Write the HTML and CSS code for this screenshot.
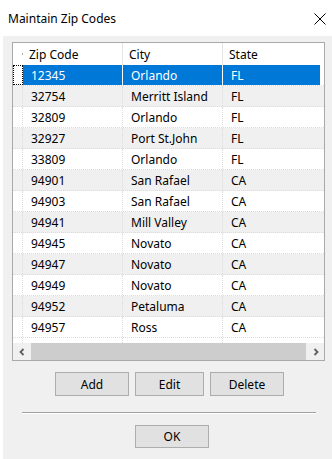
FILE: index.html
```html
<!DOCTYPE html>
<html>
<head>
<meta charset="utf-8">
<link rel="stylesheet" href="styles.css">
</head>
<body>
<div class="window">
  <div class="titlebar">
    <span class="title">Maintain Zip Codes</span>
    <svg class="close" width="12" height="12" viewBox="0 0 12 12"><path d="M0.5 0.5 L11.5 11.5 M11.5 0.5 L0.5 11.5" stroke="#000" stroke-width="1" fill="none"/></svg>
  </div>
  <div class="client">
    <div class="list">
      <div class="header">
        <div class="hcell h0"></div>
        <div class="hcell">Zip Code</div>
        <div class="hcell">City</div>
        <div class="hcell">State</div>
      </div>
      <div class="rows">
        <div class="row selected"><div class="cell c0"><span class="focus"></span></div><div class="cell">12345</div><div class="cell">Orlando</div><div class="cell">FL</div></div>
        <div class="row alt"><div class="cell c0"></div><div class="cell">32754</div><div class="cell">Merritt Island</div><div class="cell">FL</div></div>
        <div class="row"><div class="cell c0"></div><div class="cell">32809</div><div class="cell">Orlando</div><div class="cell">FL</div></div>
        <div class="row alt"><div class="cell c0"></div><div class="cell">32927</div><div class="cell">Port St.John</div><div class="cell">FL</div></div>
        <div class="row"><div class="cell c0"></div><div class="cell">33809</div><div class="cell">Orlando</div><div class="cell">FL</div></div>
        <div class="row alt"><div class="cell c0"></div><div class="cell">94901</div><div class="cell">San Rafael</div><div class="cell">CA</div></div>
        <div class="row"><div class="cell c0"></div><div class="cell">94903</div><div class="cell">San Rafael</div><div class="cell">CA</div></div>
        <div class="row alt"><div class="cell c0"></div><div class="cell">94941</div><div class="cell">Mill Valley</div><div class="cell">CA</div></div>
        <div class="row"><div class="cell c0"></div><div class="cell">94945</div><div class="cell">Novato</div><div class="cell">CA</div></div>
        <div class="row alt"><div class="cell c0"></div><div class="cell">94947</div><div class="cell">Novato</div><div class="cell">CA</div></div>
        <div class="row"><div class="cell c0"></div><div class="cell">94949</div><div class="cell">Novato</div><div class="cell">CA</div></div>
        <div class="row alt"><div class="cell c0"></div><div class="cell">94952</div><div class="cell">Petaluma</div><div class="cell">CA</div></div>
        <div class="row"><div class="cell c0"></div><div class="cell">94957</div><div class="cell">Ross</div><div class="cell">CA</div></div>
        <div class="row filler"><div class="cell c0"></div><div class="cell"></div><div class="cell"></div><div class="cell"></div></div>
      </div>
      <div class="hscroll">
        <div class="sbtn"><svg width="8" height="8" viewBox="0 0 8 8"><polyline points="5.5,1 2.5,4 5.5,7" fill="none" stroke="#606060" stroke-width="1.8"/></svg></div>
        <div class="track"><div class="thumb"></div></div>
        <div class="sbtn"><svg width="8" height="8" viewBox="0 0 8 8"><polyline points="2.5,1 5.5,4 2.5,7" fill="none" stroke="#606060" stroke-width="1.8"/></svg></div>
      </div>
    </div>
    <div class="buttons">
      <button class="btn b-add">Add</button>
      <button class="btn b-edit">Edit</button>
      <button class="btn b-del">Delete</button>
    </div>
    <div class="sep"></div>
    <div class="okrow">
      <button class="btn b-ok">OK</button>
    </div>
  </div>
</div>
</body>
</html>
```
FILE: styles.css
```css
* { box-sizing: border-box; }
html, body { margin: 0; padding: 0; background: #fff; }
body {
  font-family: "Noto Sans", "Open Sans", sans-serif;
  font-size: 12px;
  color: #000;
}
.window {
  width: 332px;
  height: 459px;
  display: flex;
  flex-direction: column;
  background: #fff;
  overflow: hidden;
}
.titlebar {
  height: 36px;
  display: flex;
  align-items: center;
  justify-content: space-between;
  padding: 2px 6px 0 8px;
}
.title { font-size: 12px; line-height: 16px; }
.close { margin-right: 0; }
.client {
  flex: 1;
  margin-left: 3px;
  background: #f0f0f0;
  padding: 6px 0 0 9px;
}
.list {
  width: 313px;
  height: 319px;
  border: 1px solid #a9a9a9;
  background: #fff;
  display: flex;
  flex-direction: column;
}
.header {
  height: 22px;
  display: grid;
  grid-template-columns: 10px 100px 100px 1fr;
}
.hcell {
  border-right: 1px solid #e5e5e5;
  padding-left: 6px;
  padding-top: 1px;
  line-height: 21px;
  white-space: nowrap;
}
.hcell.h0 { border-right: none; position: relative; }
.hcell.h0::after {
  content: "";
  position: absolute;
  right: 0;
  top: 10px;
  width: 1px;
  height: 2px;
  background: #b0b0b0;
}
.hcell:last-child { border-right: none; }
.rows { display: flex; flex-direction: column; }
.row {
  height: 21px;
  display: grid;
  grid-template-columns: 10px 100px 100px 1fr;
  border-bottom: 1px dotted #dcdcdc;
}
.row.alt { background: #f0f0f0; }
.cell {
  border-right: 1px dotted #dcdcdc;
  padding-left: 8px;
  padding-top: 1px;
  line-height: 20px;
  white-space: nowrap;
  overflow: hidden;
}
.cell:last-child { border-right: none; margin-right: 1px; }
.cell.c0 { padding: 0; position: relative; }
.row.selected .cell { background: #0078d7; color: #fff; border-right-color: #fff; border-right-style: solid; }
.row.selected .cell.c0 { background: #fff; border-right: none; }
.row.selected { border-bottom-color: #dcdcdc; }
.focus {
  position: absolute;
  left: 0;
  top: 0;
  width: 10px;
  height: 20px;
  border: 1px dotted #000;
}
.row.filler { height: 5px; border-bottom: none; }
.hscroll {
  height: 17px;
  display: flex;
  background: #f0f0f0;
}
.sbtn {
  width: 17px;
  height: 17px;
  display: flex;
  align-items: center;
  justify-content: center;
}
.track {
  flex: 1;
  padding: 0 1px;
}
.thumb { height: 17px; background: #cdcdcd; }
.buttons {
  display: flex;
  gap: 6px;
  margin: 11px 0 0 43px;
}
.btn {
  height: 24px;
  background: #e1e1e1;
  border: 1px solid #adadad;
  font-family: inherit;
  font-size: 12px;
  color: #000;
  padding: 0;
  border-radius: 0;
}
.b-add { width: 74px; }
.b-edit { width: 69px; }
.b-del { width: 74px; }
.sep {
  margin: 16px 0 0 10px;
  width: 294px;
  height: 2px;
  border-top: 1px solid #a0a0a0;
  border-bottom: 1px solid #fff;
}
.okrow { margin: 11px 0 0 123px; }
.b-ok { width: 74px; height: 23px; }
```
